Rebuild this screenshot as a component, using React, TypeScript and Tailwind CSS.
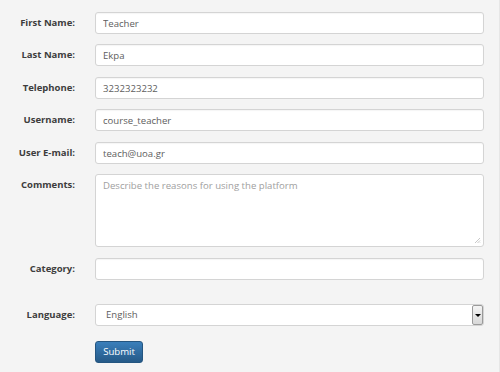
import React from 'react';

const font = { fontFamily: '"Open Sans", "Noto Sans", Arial, sans-serif' };

const Field: React.FC<{ label: string; children: React.ReactNode; className?: string }> = ({ label, children, className = '' }) => (
  <div className={`flex items-start ${className}`}>
    <label className="w-[75px] shrink-0 text-right text-[9.5px] font-bold leading-[22px] text-[#3d3d3d]">{label}</label>
    <div className="ml-[20px] w-[389px]">{children}</div>
  </div>
);

const inputCls =
  'block h-[22px] w-full rounded-[3px] border border-[#d4d4d4] bg-white px-[7px] text-[9.6px] text-[#5e5e5e] outline-none shadow-[inset_0_1px_1px_rgba(0,0,0,0.04)]';

export default function App() {
  return (
    <div style={font} className="h-[372px] w-[500px] border-r border-[#e6e6e6] bg-[#f4f4f4] pt-[12px]">
      <form className="flex flex-col" onSubmit={(e) => e.preventDefault()}>
        <Field label="First Name:">
          <input className={inputCls} defaultValue="Teacher" />
        </Field>
        <Field label="Last Name:" className="mt-[10px]">
          <input className={inputCls} defaultValue="Ekpa" />
        </Field>
        <Field label="Telephone:" className="mt-[11px]">
          <input className={inputCls} defaultValue="3232323232" />
        </Field>
        <Field label="Username:" className="mt-[10px]">
          <input className={inputCls} defaultValue="course_teacher" />
        </Field>
        <Field label="User E-mail:" className="mt-[11px]">
          <input className={inputCls} defaultValue="teach@uoa.gr" />
        </Field>
        <Field label="Comments:" className="mt-[10px]">
          <div className="relative">
            <textarea
              className="block h-[73px] w-full resize-none rounded-[3px] border border-[#d4d4d4] bg-white px-[7px] pt-[3px] text-[9.6px] leading-[15px] text-[#5e5e5e] outline-none placeholder:text-[#a0a0a0]"
              placeholder="Describe the reasons for using the platform"
            />
            <svg className="absolute bottom-[3px] right-[3px]" width="7" height="7" viewBox="0 0 7 7">
              <path d="M6 1L1 6M6 3.5L3.5 6M6 5.5L5.5 6" stroke="#c8c8c8" strokeWidth="1" />
            </svg>
          </div>
        </Field>
        <Field label="Category:" className="mt-[11px]">
          <input className={inputCls} />
        </Field>
        <Field label="Language:" className="mt-[24px]">
          <div className="relative flex h-[22px] w-full items-center rounded-[3px] border border-[#d4d4d4] bg-white pl-[10px] text-[9.6px] text-[#5e5e5e]">
            <span>English</span>
            <div className="absolute right-0 top-0 flex h-full w-[11px] items-center justify-center rounded-[2px] border border-[#9a9a9a] bg-gradient-to-b from-[#f4f4f4] to-[#d8d8d8]">
              <div className="h-0 w-0 border-x-[3px] border-t-[3px] border-x-transparent border-t-black" />
            </div>
          </div>
        </Field>
        <div className="mt-[11px] pl-[95px]">
          <button
            type="submit"
            className="h-[22px] w-[48px] rounded-[3px] border border-[#245580] bg-gradient-to-b from-[#3a7fbb] to-[#265a88] text-[9.6px] text-white"
          >
            Submit
          </button>
        </div>
      </form>
    </div>
  );
}
